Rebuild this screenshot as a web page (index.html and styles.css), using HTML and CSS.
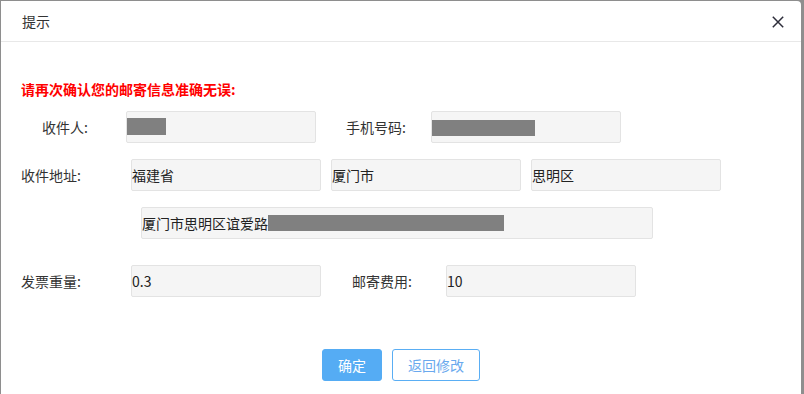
FILE: index.html
```html
<!DOCTYPE html>
<html lang="zh-CN">
<head>
<meta charset="utf-8">
<title>提示</title>
<link rel="stylesheet" href="styles.css">
</head>
<body>
<div class="backdrop-strip"></div>
<div class="dialog">
  <div class="dialog-header">
    <span class="dialog-title">提示</span>
    <span class="dialog-close" aria-label="关闭">
      <svg width="12" height="12" viewBox="0 0 12 12"><path d="M0.8 0.8 L11.2 11.2 M11.2 0.8 L0.8 11.2" stroke="#2d2d3a" stroke-width="1.5" fill="none"/></svg>
    </span>
  </div>
  <div class="dialog-body">
    <p class="warn">请再次确认您的邮寄信息准确无误:</p>

    <div class="row row-1">
      <span class="label label-name">收件人:</span>
      <div class="field"><span class="redact redact-name"></span></div>
      <span class="label label-phone">手机号码:</span>
      <div class="field"><span class="redact redact-phone"></span></div>
    </div>

    <div class="row row-2">
      <span class="label label-wide">收件地址:</span>
      <div class="field">福建省</div>
      <div class="field field-gap">厦门市</div>
      <div class="field field-gap">思明区</div>
    </div>

    <div class="row row-3">
      <div class="field field-long">厦门市思明区谊爱路<span class="redact redact-addr"></span></div>
    </div>

    <div class="row row-4">
      <span class="label label-wide">发票重量:</span>
      <div class="field">0.3</div>
      <span class="label label-fee">邮寄费用:</span>
      <div class="field">10</div>
    </div>

    <div class="actions">
      <button class="btn btn-primary">确定</button>
      <button class="btn btn-ghost">返回修改</button>
    </div>
  </div>
</div>
</body>
</html>
```

FILE: styles.css
```css
* { box-sizing: border-box; }
html, body {
  margin: 0;
  padding: 0;
  height: 100%;
  overflow: hidden;
}
body {
  background: #8e8e8e;
  font-family: "Noto Sans CJK SC", "Liberation Sans", sans-serif;
  color: #333;
  font-size: 14px;
}
.backdrop-strip {
  height: 1px;
  background: #8e8e8e;
}
.dialog {
  margin-left: 1px;
  width: 800px;
  height: 393px;
  background: #fff;
  border-radius: 0 4px 0 0;
}
.dialog-header {
  height: 41px;
  border-bottom: 1px solid #e8e8e8;
  display: flex;
  align-items: center;
  justify-content: space-between;
  padding: 0 17px 0 21px;
}
.dialog-title {
  font-size: 14px;
  line-height: 20px;
  color: #333;
  margin-top: -1px;
}
.dialog-close {
  display: flex;
  width: 12px;
  height: 12px;
  margin-top: 1px;
}
.dialog-body {
  padding-top: 37px;
}
.warn {
  margin: 0 0 12px 20px;
  color: #ff0000;
  font-weight: bold;
  font-size: 14px;
  line-height: 20px;
  height: 20px;
}
.row {
  display: flex;
  align-items: center;
  height: 32px;
}
.row-1 { padding-left: 41px; margin-bottom: 16px; }
.row-2 { padding-left: 20px; margin-bottom: 16px; }
.row-3 { padding-left: 140px; margin-bottom: 26px; }
.row-4 { padding-left: 20px; }
.label {
  font-size: 14px;
  line-height: 20px;
  color: #333;
  flex: none;
}
.label-name { width: 84px; }
.label-phone { width: 85px; margin-left: 30px; }
.label-wide { width: 110px; }
.label-fee { width: 94px; margin-left: 31px; }
.field {
  flex: none;
  width: 190px;
  height: 32px;
  background: #f5f5f5;
  border: 1px solid #e3e3e3;
  border-radius: 2px;
  display: flex;
  align-items: center;
  padding-left: 0;
  font-size: 14px;
  color: #222;
  line-height: 20px;
}
.field-gap { margin-left: 10px; }
.field-long { width: 512px; }
.redact {
  display: inline-block;
  background: #808080;
  height: 16px;
}
.redact-name { width: 39px; height: 17px; margin-top: -1px; }
.redact-phone { width: 103px; margin-top: 2px; }
.redact-addr { width: 236px; }
.actions {
  margin-top: 52px;
  display: flex;
  justify-content: center;
  gap: 10px;
}
.btn {
  height: 32px;
  font-family: inherit;
  font-size: 14px;
  line-height: 20px;
  border-radius: 3px;
  padding: 0;
  cursor: pointer;
}
.btn-primary {
  width: 60px;
  background: #55acf4;
  border: 1px solid #55acf4;
  color: #fff;
}
.btn-ghost {
  width: 88px;
  background: #fff;
  border: 1px solid #5aaef4;
  color: #6aa9ee;
}
```
